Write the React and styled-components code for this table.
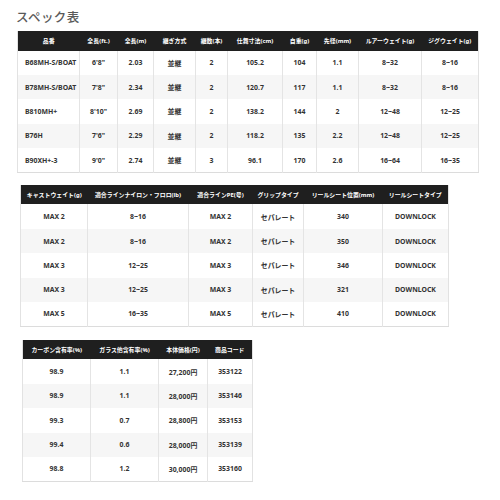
import React from "react";
import styled, { createGlobalStyle } from "styled-components";

const Global = createGlobalStyle`
  html, body { margin: 0; padding: 0; background: #fff; }
  body { font-family: "Noto Sans", "Noto Sans CJK JP", sans-serif; }
`;

const Page = styled.div`
  width: 500px;
  height: 500px;
  overflow: hidden;
  padding: 6px 0 0 16px;
  box-sizing: border-box;
`;

const Title = styled.h2`
  margin: 0;
  font-family: "Noto Sans CJK JP", sans-serif;
  font-size: 12.5px;
  line-height: 21px;
  font-weight: 500;
  color: #5a5a5a;
  letter-spacing: 0.4px;
`;

const Table = styled.table`
  border-collapse: collapse;
  table-layout: fixed;
  margin-left: ${(p) => p.$ml}px;
  margin-top: ${(p) => p.$mt}px;
  width: ${(p) => p.$w}px;
  border-left: 1px solid #e2e2e2;
  border-right: 1px solid #e2e2e2;
  border-bottom: 1px solid #dcdcdc;
`;

const Th = styled.th`
  background: #1f1f1f;
  color: #fff;
  font-weight: 700;
  font-size: 5.9px;
  height: 19.5px;
  padding: 0;
  text-align: center;
  white-space: nowrap;
  overflow: hidden;
`;

const Tr = styled.tr`
  height: 24.4px;
  background: ${(p) => (p.$alt ? "#f6f6f6" : "#fff")};
`;

const Td = styled.td`
  padding: 0;
  font-size: 6.9px;
  text-align: ${(p) => (p.$left ? "left" : "center")};
  padding-left: ${(p) => (p.$left ? "7px" : "0")};
  color: #333;
  font-weight: 700;
  border-left: 1px solid #e4e4e4;
  white-space: nowrap;
  &:first-child { border-left: none; }
`;

function Spec({ cols, head, rows, ml, mt, leftFirst }) {
  const w = cols.reduce((a, b) => a + b, 0);
  return (
    <Table $ml={ml} $mt={mt} $w={w}>
      <colgroup>
        {cols.map((c, i) => (
          <col key={i} style={{ width: c }} />
        ))}
      </colgroup>
      <thead>
        <tr>
          {head.map((h, i) => (
            <Th key={i}>{h}</Th>
          ))}
        </tr>
      </thead>
      <tbody>
        {rows.map((r, i) => (
          <Tr key={i} $alt={i % 2 === 1}>
            {r.map((c, j) => (
              <Td key={j} $left={leftFirst && j === 0}>
                {c}
              </Td>
            ))}
          </Tr>
        ))}
      </tbody>
    </Table>
  );
}

const t1 = {
  cols: [62, 38, 36, 42, 32, 55, 34, 42, 63, 57],
  head: ["品番", "全長(ft.)", "全長(m)", "継ぎ方式", "継数(本)", "仕舞寸法(cm)", "自重(g)", "先径(mm)", "ルアーウェイト(g)", "ジグウェイト(g)"],
  rows: [
    ["B68MH-S/BOAT", "6'8\"", "2.03", "並継", "2", "105.2", "104", "1.1", "8~32", "8~16"],
    ["B78MH-S/BOAT", "7'8\"", "2.34", "並継", "2", "120.7", "117", "1.1", "8~32", "8~16"],
    ["B810MH+", "8'10\"", "2.69", "並継", "2", "138.2", "144", "2", "12~48", "12~25"],
    ["B76H", "7'6\"", "2.29", "並継", "2", "118.2", "135", "2.2", "12~48", "12~25"],
    ["B90XH+-3", "9'0\"", "2.74", "並継", "3", "96.1", "170", "2.6", "16~64", "16~35"],
  ],
};

const t2 = {
  cols: [67, 101, 64, 51, 79, 66],
  head: ["キャストウェイト(g)", "適合ラインナイロン・フロロ(lb)", "適合ラインPE(号)", "グリップタイプ", "リールシート位置(mm)", "リールシートタイプ"],
  rows: [
    ["MAX 2", "8~16", "MAX 2", "セパレート", "340", "DOWNLOCK"],
    ["MAX 2", "8~16", "MAX 2", "セパレート", "350", "DOWNLOCK"],
    ["MAX 3", "12~25", "MAX 3", "セパレート", "346", "DOWNLOCK"],
    ["MAX 3", "12~25", "MAX 3", "セパレート", "321", "DOWNLOCK"],
    ["MAX 5", "16~35", "MAX 5", "セパレート", "410", "DOWNLOCK"],
  ],
};

const t3 = {
  cols: [68, 68, 49, 45],
  head: ["カーボン含有率(%)", "ガラス他含有率(%)", "本体価格(円)", "商品コード"],
  rows: [
    ["98.9", "1.1", "27,200円", "353122"],
    ["98.9", "1.1", "28,000円", "353146"],
    ["99.3", "0.7", "28,800円", "353153"],
    ["99.4", "0.6", "28,000円", "353139"],
    ["98.8", "1.2", "30,000円", "353160"],
  ],
};

export default function App() {
  return (
    <Page>
      <Global />
      <Title>スペック表</Title>
      <Spec {...t1} ml={1} mt={4} leftFirst />
      <Spec {...t2} ml={4} mt={12} />
      <Spec {...t3} ml={6} mt={13} />
    </Page>
  );
}
